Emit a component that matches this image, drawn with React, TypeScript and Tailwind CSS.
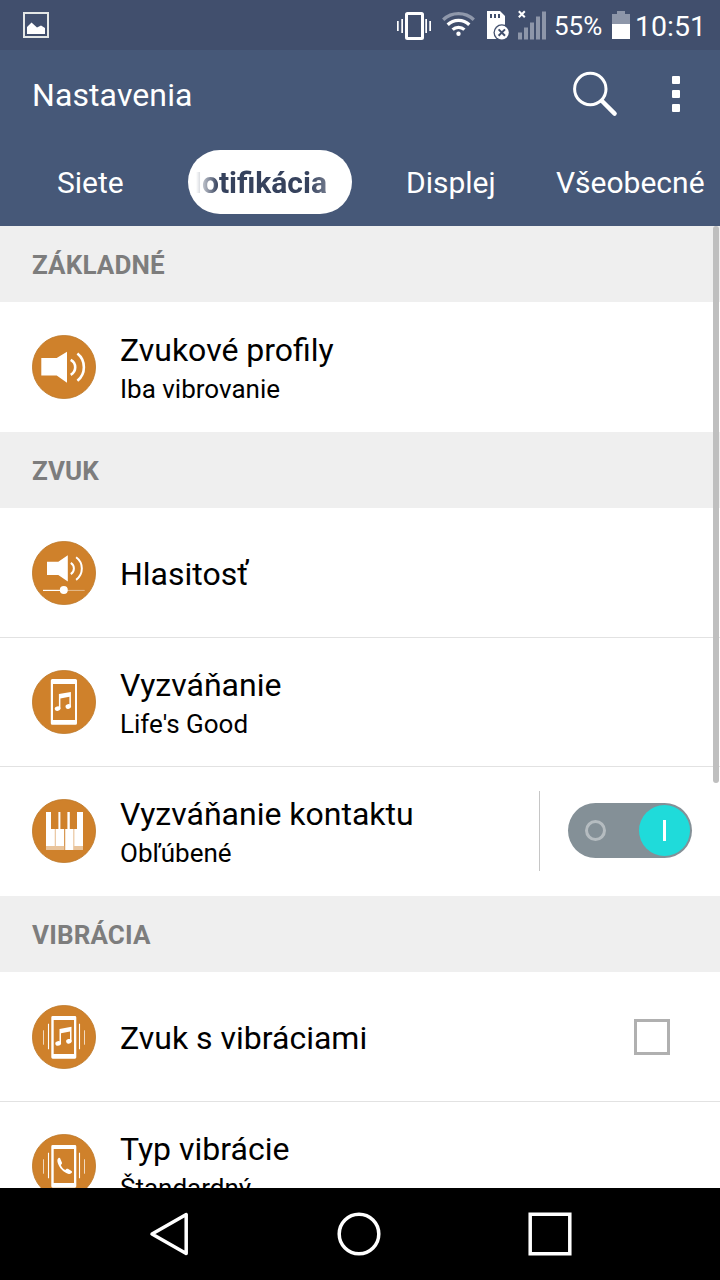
import type { ReactNode } from "react";

const Badge = ({ children }: { children: ReactNode }) => (
  <svg viewBox="0 0 64 64" className="h-16 w-16 shrink-0" fill="none">
    <circle cx="32" cy="32" r="31.6" fill="#cf812b" stroke="#bd7829" strokeWidth="0.8" />
    {children}
  </svg>
);

const Note = () => (
  <g fill="#fff">
    <path d="M26.900 24.100 38.900 22v14.600h-1.500V26.800l-9 1.600v10.300h-1.500z" />
    <ellipse cx="25.600" cy="38.600" rx="2.900" ry="2.300" transform="rotate(-15 25.600 38.600)" />
    <ellipse cx="36.300" cy="36.500" rx="2.800" ry="2.300" transform="rotate(-15 36.300 36.500)" />
  </g>
);

const VibratingPhone = () => (
  <>
    <path
      fill="#fff"
      fillRule="evenodd"
      d="M20.7 11h22.2a1.4 1.4 0 0 1 1.4 1.4v39.9a1.4 1.4 0 0 1-1.4 1.4H20.7a1.4 1.4 0 0 1-1.4-1.4V12.4a1.4 1.4 0 0 1 1.4-1.4zm1 4v34H42V15z"
    />
    <path stroke="#fff" strokeWidth="1.1" d="M16.5 18.7v25.6M47.5 18.7v25.6" />
    <path stroke="#fff" strokeOpacity="0.7" strokeWidth="1" d="M11.5 25.3v14.4M52.5 25.3v14.4" />
  </>
);

const ProfileIcon = () => (
  <Badge>
    <path fill="#fff" d="M9.3 23h15.4L35 16.7v31L24.7 40.4H9.3z" />
    <path stroke="#fff" strokeWidth="2.6" d="M38.7 24.8a8.500 8.500 0 0 1 0 15M45.400 18.600a17.500 17.500 0 0 1 0 27.200" />
  </Badge>
);

const VolumeIcon = () => (
  <Badge>
    <path fill="#fff" d="M15 20.7h11.3l9.5-6.500v26.400L26.300 34H15z" />
    <path stroke="#fff" strokeWidth="2" d="M38.800 21.800a6.800 6.800 0 0 1 0 11.400M44.100 16.300a14 14 0 0 1 0 22.600" />
    <path stroke="#fff" strokeWidth="1.2" d="M11 49.400h21" />
    <path stroke="#fff" strokeOpacity="0.6" strokeWidth="0.8" d="M32 49.400h20.700" />
    <circle cx="31.800" cy="49" r="4" fill="#fff" />
  </Badge>
);

const RingtoneIcon = () => (
  <Badge>
    <path
      fill="#fff"
      fillRule="evenodd"
      d="M20.3 9h23.2a1.5 1.5 0 0 1 1.5 1.5v42.7a1.5 1.5 0 0 1-1.5 1.5H20.3a1.5 1.5 0 0 1-1.5-1.5V10.5A1.5 1.5 0 0 1 20.3 9zm.7 5v36h22V14z"
    />
    <Note />
  </Badge>
);

const PianoIcon = () => (
  <Badge>
    <path fill="#fff" d="M14 13h37v38H14z" />
    <path fill="#cf812b" d="M19 13h7.400v17H19zM28.400 13h7v17h-7zM37.800 13H45v17h-7.200zM32.200 30h1v21h-1z" />
    <path fill="#cf812b" fillOpacity="0.6" d="M22.800 30h.9v21h-.9zM41.400 30h.9v21h-.9z" />
    <path fill="#e9c49b" d="M14 47h18.200v4H14zM41.800 47H51v4h-9.200z" />
  </Badge>
);

const VibrateSoundIcon = () => (
  <Badge>
    <VibratingPhone />
    <g transform="translate(.6 -.2)">
      <Note />
    </g>
  </Badge>
);

const VibrateTypeIcon = () => (
  <Badge>
    <VibratingPhone />
    <path
      fill="#fff"
      d="M26.800 23.800c-1.500 1-1.800 2.800-1 5.200 1.600 5 5.400 9 10.200 10.700 1.700.6 3.200.1 3.900-1.200.3-.6.1-1.200-.4-1.500l-3.600-2.200c-.6-.3-1.200-.2-1.600.3l-.9 1c-2.300-1.100-3.800-2.900-4.600-5.100l.9-.9c.4-.4.500-1 .2-1.500l-1.800-4.300c-.3-.6-.8-.8-1.300-.5z"
    />
  </Badge>
);

type Item = {
  title: string;
  subtitle?: string;
  icon: ReactNode;
  control?: "switch" | "checkbox";
};

const sections: { name: string; items: Item[] }[] = [
  {
    name: "ZÁKLADNÉ",
    items: [{ title: "Zvukové profily", subtitle: "Iba vibrovanie", icon: <ProfileIcon /> }],
  },
  {
    name: "ZVUK",
    items: [
      { title: "Hlasitosť", icon: <VolumeIcon /> },
      { title: "Vyzváňanie", subtitle: "Life's Good", icon: <RingtoneIcon /> },
      { title: "Vyzváňanie kontaktu", subtitle: "Obľúbené", icon: <PianoIcon />, control: "switch" },
    ],
  },
  {
    name: "VIBRÁCIA",
    items: [
      { title: "Zvuk s vibráciami", icon: <VibrateSoundIcon />, control: "checkbox" },
      { title: "Typ vibrácie", subtitle: "Štandardný", icon: <VibrateTypeIcon /> },
    ],
  },
];

const StatusBar = () => (
  <div className="flex h-[50px] shrink-0 items-center justify-between bg-[#414f6d] pl-[23px] pr-[15px]">
    <svg width="26" height="26" viewBox="0 0 26 26" fill="none">
      <path stroke="#e4e7e6" strokeWidth="2" d="M1 1h24v24H1z" />
      <path fill="#fff" d="M4 22v-7l4.500-4.500 5.500 5 4-2 4 2.500V22z" />
    </svg>
    <div className="flex items-center">
      <svg width="34" height="28" viewBox="0 0 34 28" fill="none" className="mr-[11px] mt-0.5">
        <rect x="9.500" y="1.500" width="16" height="25" rx="1" stroke="#fff" strokeWidth="3" />
        <path fill="#fff" d="M0 9h1.700v10H0zM4.300 7H6v14H4.300zM28.300 7H30v14h-1.700zM32.300 9H34v10h-1.700z" />
      </svg>
      <svg width="33" height="28" viewBox="0 0 33 28" fill="none" className="mr-3 mt-0.5">
        <path stroke="#8f98ab" strokeWidth="3.300" d="M1.200 7.700a22.500 22.500 0 0 1 30.600 0" />
        <path stroke="#fff" strokeWidth="3.300" d="M5.700 12.700a15.500 15.500 0 0 1 21.600 0M10.600 17.600a8.800 8.800 0 0 1 11.800 0" />
        <circle cx="16.500" cy="21.800" r="2.200" fill="#fff" />
      </svg>
      <svg width="23" height="30" viewBox="0 0 23 30" fill="none" className="mr-2">
        <path fill="#fff" d="M0 1h13l5 5v23H0z" />
        <path fill="#414f6d" d="M3 4h2v4H3zM7 4h2v4H7zM11 4h2v4h-2z" />
        <circle cx="14.800" cy="22.600" r="8.300" fill="#414f6d" />
        <circle cx="14.800" cy="22.600" r="7" fill="#fff" />
        <path stroke="#414f6d" strokeWidth="2" d="m11.600 19.400 6.400 6.400m0-6.400-6.400 6.400" />
      </svg>
      <svg width="28" height="30" viewBox="0 0 28 30" fill="none" className="mr-2">
        <path stroke="#fff" strokeWidth="2" d="m.800 1.300 6 6m0-6-6 6" />
        <path fill="#8d96a9" d="M0 22.500h4v7H0zM6 17.500h4v12H6zM12 12.500h4v17h-4zM18 6.500h4v23h-4zM24 1.500h4v28h-4z" />
      </svg>
      <span className="mr-2.5 w-[48px] whitespace-nowrap pt-0.5 text-[26px] leading-[50px]">55%</span>
      <svg width="18" height="28" viewBox="0 0 18 28" className="mr-[5px]">
        <path fill="#8d96a9" d="M0 3h5V0h8v3h5v10H0z" />
        <path fill="#fff" d="M0 13h18v15H0z" />
      </svg>
      <span className="w-[70px] whitespace-nowrap pt-[3px] text-[28.5px] leading-[50px]">10:51</span>
    </div>
  </div>
);

const Header = () => (
  <header className="h-[176px] shrink-0 bg-[#465878]">
    <div className="flex h-[92px] pl-8 pr-10">
      <h1 className="flex-1 text-[32px] leading-[90px] tracking-[0.1px]">Nastavenia</h1>
      <div className="flex h-[87px] items-center gap-[54px]">
        <svg width="46" height="46" viewBox="0 0 46 46" fill="none">
          <circle cx="18.300" cy="18" r="15.700" stroke="#fff" strokeWidth="3" />
          <path stroke="#fff" strokeWidth="4.400" strokeLinecap="round" d="m30 30 12.600 12.600" />
        </svg>
        <div className="flex flex-col gap-1.5 pt-px">
          <span className="h-2 w-2 rounded-[1px] bg-white" />
          <span className="h-2 w-2 rounded-[1px] bg-white" />
          <span className="h-2 w-2 rounded-[1px] bg-white" />
        </div>
      </div>
    </div>
    <nav className="flex h-[84px] pt-2 text-[30px] leading-[66px]">
      <span className="w-[188px] pl-[57px]">Siete</span>
      <span className="flex h-16 w-[164px] justify-center rounded-full bg-white pl-2 pr-[25px] font-bold text-[#36425d]">
        <span className="flex w-[131px] justify-end overflow-hidden [mask-image:linear-gradient(to_right,transparent,black_22px,black_112px,rgba(0,0,0,0.7))]">
          Notifikácia
        </span>
      </span>
      <span className="w-[204px] pl-[54px]">Displej</span>
      <span>Všeobecné</span>
    </nav>
  </header>
);

const Switch = () => (
  <div className="flex items-center gap-7">
    <div className="h-20 w-px bg-[#c6c6c6]" />
    <div className="mb-px flex h-[55px] w-[124px] items-center justify-between rounded-full bg-[#849097] pl-[17px] pr-0.5">
      <span className="h-[21px] w-[21px] rounded-full border-3 border-[#b5bcc0]" />
      <span className="flex h-[51px] w-[51px] items-center justify-center rounded-full bg-[#1fdbda]">
        <span className="h-[21px] w-[3px] bg-white" />
      </span>
    </div>
  </div>
);

const Row = ({ item, last }: { item: Item; last: boolean }) => (
  <li className={`flex h-[129px] items-center border-b px-8 ${last ? "border-white" : "border-[#e2e2e2]"}`}>
    {item.icon}
    <div className="ml-6 flex-1 whitespace-nowrap pt-0.5">
      <p className="text-[32px] leading-[42px]">{item.title}</p>
      {item.subtitle && <p className="text-[26px] leading-9">{item.subtitle}</p>}
    </div>
    {item.control === "switch" && (
      <div className="-mr-1">
        <Switch />
      </div>
    )}
    {item.control === "checkbox" && <span className="mr-[18px] h-9 w-9 border-3 border-[#b0b0b0]" />}
  </li>
);

export default function App() {
  return (
    <div className="flex h-[1280px] w-[720px] flex-col overflow-hidden bg-white font-[Roboto,sans-serif] text-white">
      <StatusBar />
      <Header />
      <main className="relative min-h-0 flex-1 overflow-hidden text-black">
        {sections.map((section) => (
          <section key={section.name}>
            <h2 className="h-[76px] bg-[#efefef] pl-8 text-[26px] font-bold leading-[78px] tracking-[0.15px] text-[#7d7d7d]">
              {section.name}
            </h2>
            <ul className="pt-px">
              {section.items.map((item, i) => (
                <Row key={item.title} item={item} last={i === section.items.length - 1} />
              ))}
            </ul>
          </section>
        ))}
        <div className="absolute right-px top-0 h-[557px] w-1.5 rounded-full bg-[#bfbfbf]" />
      </main>
      <footer className="flex h-[92px] shrink-0 items-center bg-black pl-[149px]">
        <svg width="40" height="46" viewBox="0 0 40 46" fill="none">
          <path stroke="#fff" strokeWidth="3.500" strokeLinejoin="round" d="M37.200 3.500v39L3 23z" />
        </svg>
        <svg width="44" height="44" viewBox="0 0 44 44" fill="none" className="ml-[148px]">
          <circle cx="22" cy="22" r="19.800" stroke="#fff" strokeWidth="3.500" />
        </svg>
        <svg width="44" height="44" viewBox="0 0 44 44" fill="none" className="ml-[147px]">
          <path stroke="#fff" strokeWidth="3.500" d="M2.200 2.200h39.600v39.600H2.200z" />
        </svg>
      </footer>
    </div>
  );
}
